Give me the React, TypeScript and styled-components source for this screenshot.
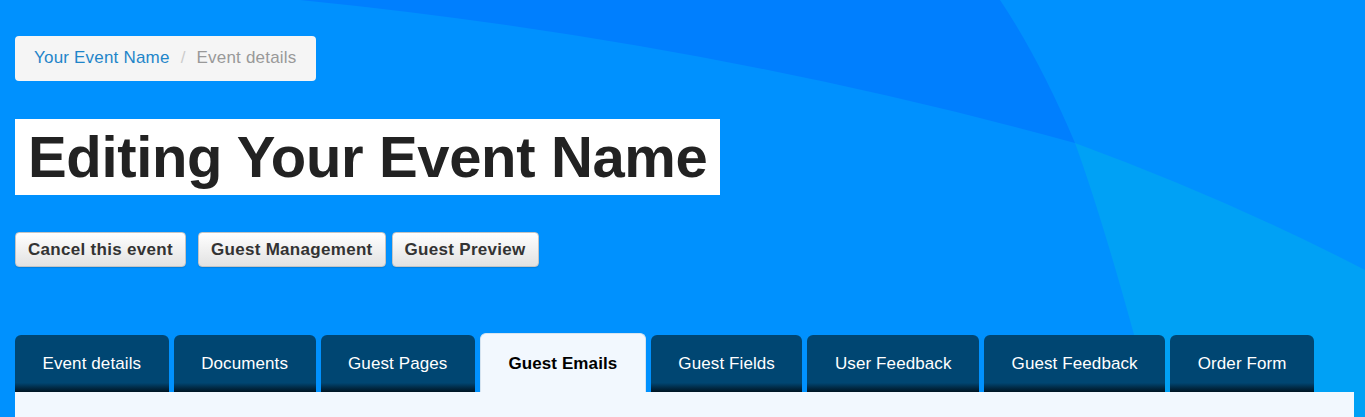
import React from 'react';
import styled, { createGlobalStyle } from 'styled-components';

const GlobalStyle = createGlobalStyle`
  html, body {
    margin: 0;
    padding: 0;
    background: #0091fe;
    font-family: "Liberation Sans", Arial, sans-serif;
    overflow: hidden;
  }
`;

const Page = styled.div`
  position: relative;
  width: 1365px;
  height: 417px;
  overflow: hidden;
`;

const Backdrop = styled.svg`
  position: absolute;
  inset: 0;
  z-index: 0;
`;

const Content = styled.div`
  position: relative;
  z-index: 1;
  display: flex;
  flex-direction: column;
  align-items: flex-start;
  padding: 36px 11px 0 15px;
`;

const Breadcrumb = styled.ol`
  display: flex;
  align-items: center;
  margin: 0;
  padding: 10px 19px 11px 19px;
  list-style: none;
  background: #f5f5f5;
  border-radius: 4px;
  font-size: 17px;
  line-height: 24px;
  letter-spacing: 0.2px;
`;

const Crumb = styled.li<{ $active?: boolean }>`
  color: ${(p) => (p.$active ? '#999999' : '#1f85c9')};
  &:not(:first-child)::before {
    content: '/';
    color: #cccccc;
    padding: 0 11px 0 11px;
  }
`;

const Title = styled.h1`
  margin: 38px 0 0 0;
  padding: 0 13px;
  background: #ffffff;
  color: #222222;
  font-size: 58px;
  font-weight: bold;
  line-height: 76px;
  letter-spacing: -0.35px;
`;

const Actions = styled.div`
  display: flex;
  margin-top: 37px;
`;

const ActionButton = styled.button<{ $gap: number }>`
  margin-left: ${(p) => p.$gap}px;
  height: 35px;
  padding: 0 12px;
  font-family: "Liberation Sans", Arial, sans-serif;
  font-size: 17px;
  font-weight: bold;
  letter-spacing: 0.3px;
  color: #333333;
  background: linear-gradient(to bottom, #ffffff 0%, #e2e2e2 100%);
  border: 1px solid #c4c4c4;
  border-radius: 4px;
  box-shadow: 0 1px 1px rgba(0, 0, 0, 0.12);
`;

const TabBar = styled.div`
  display: flex;
  gap: 5px;
  margin-top: 66px;
  align-items: flex-end;
`;

const Tab = styled.div<{ $active?: boolean }>`
  display: flex;
  align-items: center;
  justify-content: center;
  height: ${(p) => (p.$active ? 59 : 57)}px;
  padding: 0 27.5px;
  box-sizing: border-box;
  border-radius: 6px 6px 0 0;
  font-size: 17px;
  letter-spacing: 0.1px;
  font-weight: ${(p) => (p.$active ? 'bold' : 'normal')};
  color: ${(p) => (p.$active ? '#000000' : '#ffffff')};
  background: ${(p) =>
    p.$active
      ? '#f2f8fe'
      : 'linear-gradient(to bottom, #004672 0%, #004672 84%, #012c48 92%, #001522 100%)'};
  border: ${(p) => (p.$active ? '1px solid #d6e4f0' : 'none')};
  border-bottom: none;
  padding-top: ${(p) => (p.$active ? 2 : 0)}px;
`;

const Panel = styled.div`
  align-self: stretch;
  height: 40px;
  background: #f2f8fe;
`;

const tabs = [
  'Event details',
  'Documents',
  'Guest Pages',
  'Guest Emails',
  'Guest Fields',
  'User Feedback',
  'Guest Feedback',
  'Order Form',
];

export default function App() {
  return (
    <Page>
      <GlobalStyle />
      <Backdrop width="1365" height="417" viewBox="0 0 1365 417">
        <rect width="1365" height="417" fill="#0091fe" />
        <path d="M300,0 Q700,40 1075,143 Q1040,60 1000,0 Z" fill="#007ffe" />
        <path
          d="M1075,143 Q1230,200 1365,270 L1365,417 L1156,417 Q1110,240 1075,143 Z"
          fill="#00a1f5"
        />
      </Backdrop>
      <Content>
        <Breadcrumb>
          <Crumb>Your Event Name</Crumb>
          <Crumb $active>Event details</Crumb>
        </Breadcrumb>
        <Title>Editing Your Event Name</Title>
        <Actions>
          <ActionButton $gap={0}>Cancel this event</ActionButton>
          <ActionButton $gap={12}>Guest Management</ActionButton>
          <ActionButton $gap={6}>Guest Preview</ActionButton>
        </Actions>
        <TabBar>
          {tabs.map((t) => (
            <Tab key={t} $active={t === 'Guest Emails'}>
              {t}
            </Tab>
          ))}
        </TabBar>
        <Panel />
      </Content>
    </Page>
  );
}
